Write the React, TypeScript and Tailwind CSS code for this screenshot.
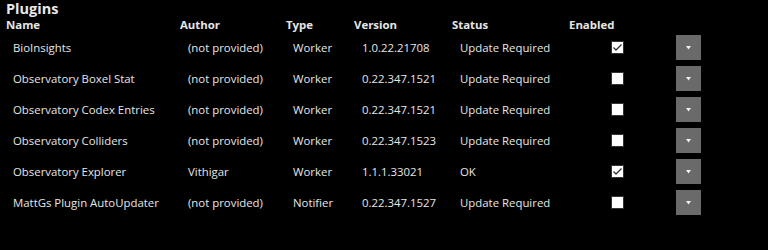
import React from "react";

const rows = [
  { name: "BioInsights", author: "(not provided)", type: "Worker", version: "1.0.22.21708", status: "Update Required", enabled: true },
  { name: "Observatory Boxel Stat", author: "(not provided)", type: "Worker", version: "0.22.347.1521", status: "Update Required", enabled: false },
  { name: "Observatory Codex Entries", author: "(not provided)", type: "Worker", version: "0.22.347.1521", status: "Update Required", enabled: false },
  { name: "Observatory Colliders", author: "(not provided)", type: "Worker", version: "0.22.347.1523", status: "Update Required", enabled: false },
  { name: "Observatory Explorer", author: "Vithigar", type: "Worker", version: "1.1.1.33021", status: "OK", enabled: true },
  { name: "MattGs Plugin AutoUpdater", author: "(not provided)", type: "Notifier", version: "0.22.347.1527", status: "Update Required", enabled: false },
];

const cols = "grid grid-cols-[174px_106px_68px_98px_117px_42px_65px_25px]";

export default function App() {
  return (
    <div
      className="w-[768px] h-[250px] bg-black text-[#e6e6e6] overflow-hidden"
      style={{ fontFamily: '"Open Sans", "Noto Sans", sans-serif' }}
    >
      <div className="pl-[6px] text-[14.5px] font-bold leading-[17px] text-[#e8e8e8]">Plugins</div>
      <div className={`${cols} pl-[6px] text-[11.4px] font-bold leading-[15px]`}>
        <div>Name</div>
        <div>Author</div>
        <div>Type</div>
        <div>Version</div>
        <div>Status</div>
        <div className="col-span-2">Enabled</div>
        <div></div>
      </div>
      <div className="flex flex-col">
        {rows.map((r, i) => (
          <div key={i} className={`${cols} pl-[6px] h-[31px] items-center text-[11.4px] leading-[15px]`}>
            <div className="pl-[7px] whitespace-nowrap">{r.name}</div>
            <div className="pl-[8px] whitespace-nowrap">{r.author}</div>
            <div className="pl-[7px] whitespace-nowrap">{r.type}</div>
            <div className="pl-[8px] whitespace-nowrap">{r.version}</div>
            <div className="pl-[8px] whitespace-nowrap">{r.status}</div>
            <div></div>
            <div className="flex">
              <div className="w-[13px] h-[13px] bg-white border border-[#333] flex items-center justify-center">
                {r.enabled && (
                  <svg width="11" height="11" viewBox="0 0 11 11">
                    <path d="M1.5 5.5 L4 8 L9.5 2.5" fill="none" stroke="#333" strokeWidth="1.3" />
                  </svg>
                )}
              </div>
            </div>
            <div className="w-[25px] h-[25px] bg-[#6a6a6a] flex items-center justify-center">
              <svg width="5" height="4" viewBox="0 0 5 4">
                <path d="M0 0 L5 0 L2.5 3.5 Z" fill="#f0f0f0" />
              </svg>
            </div>
          </div>
        ))}
      </div>
    </div>
  );
}
